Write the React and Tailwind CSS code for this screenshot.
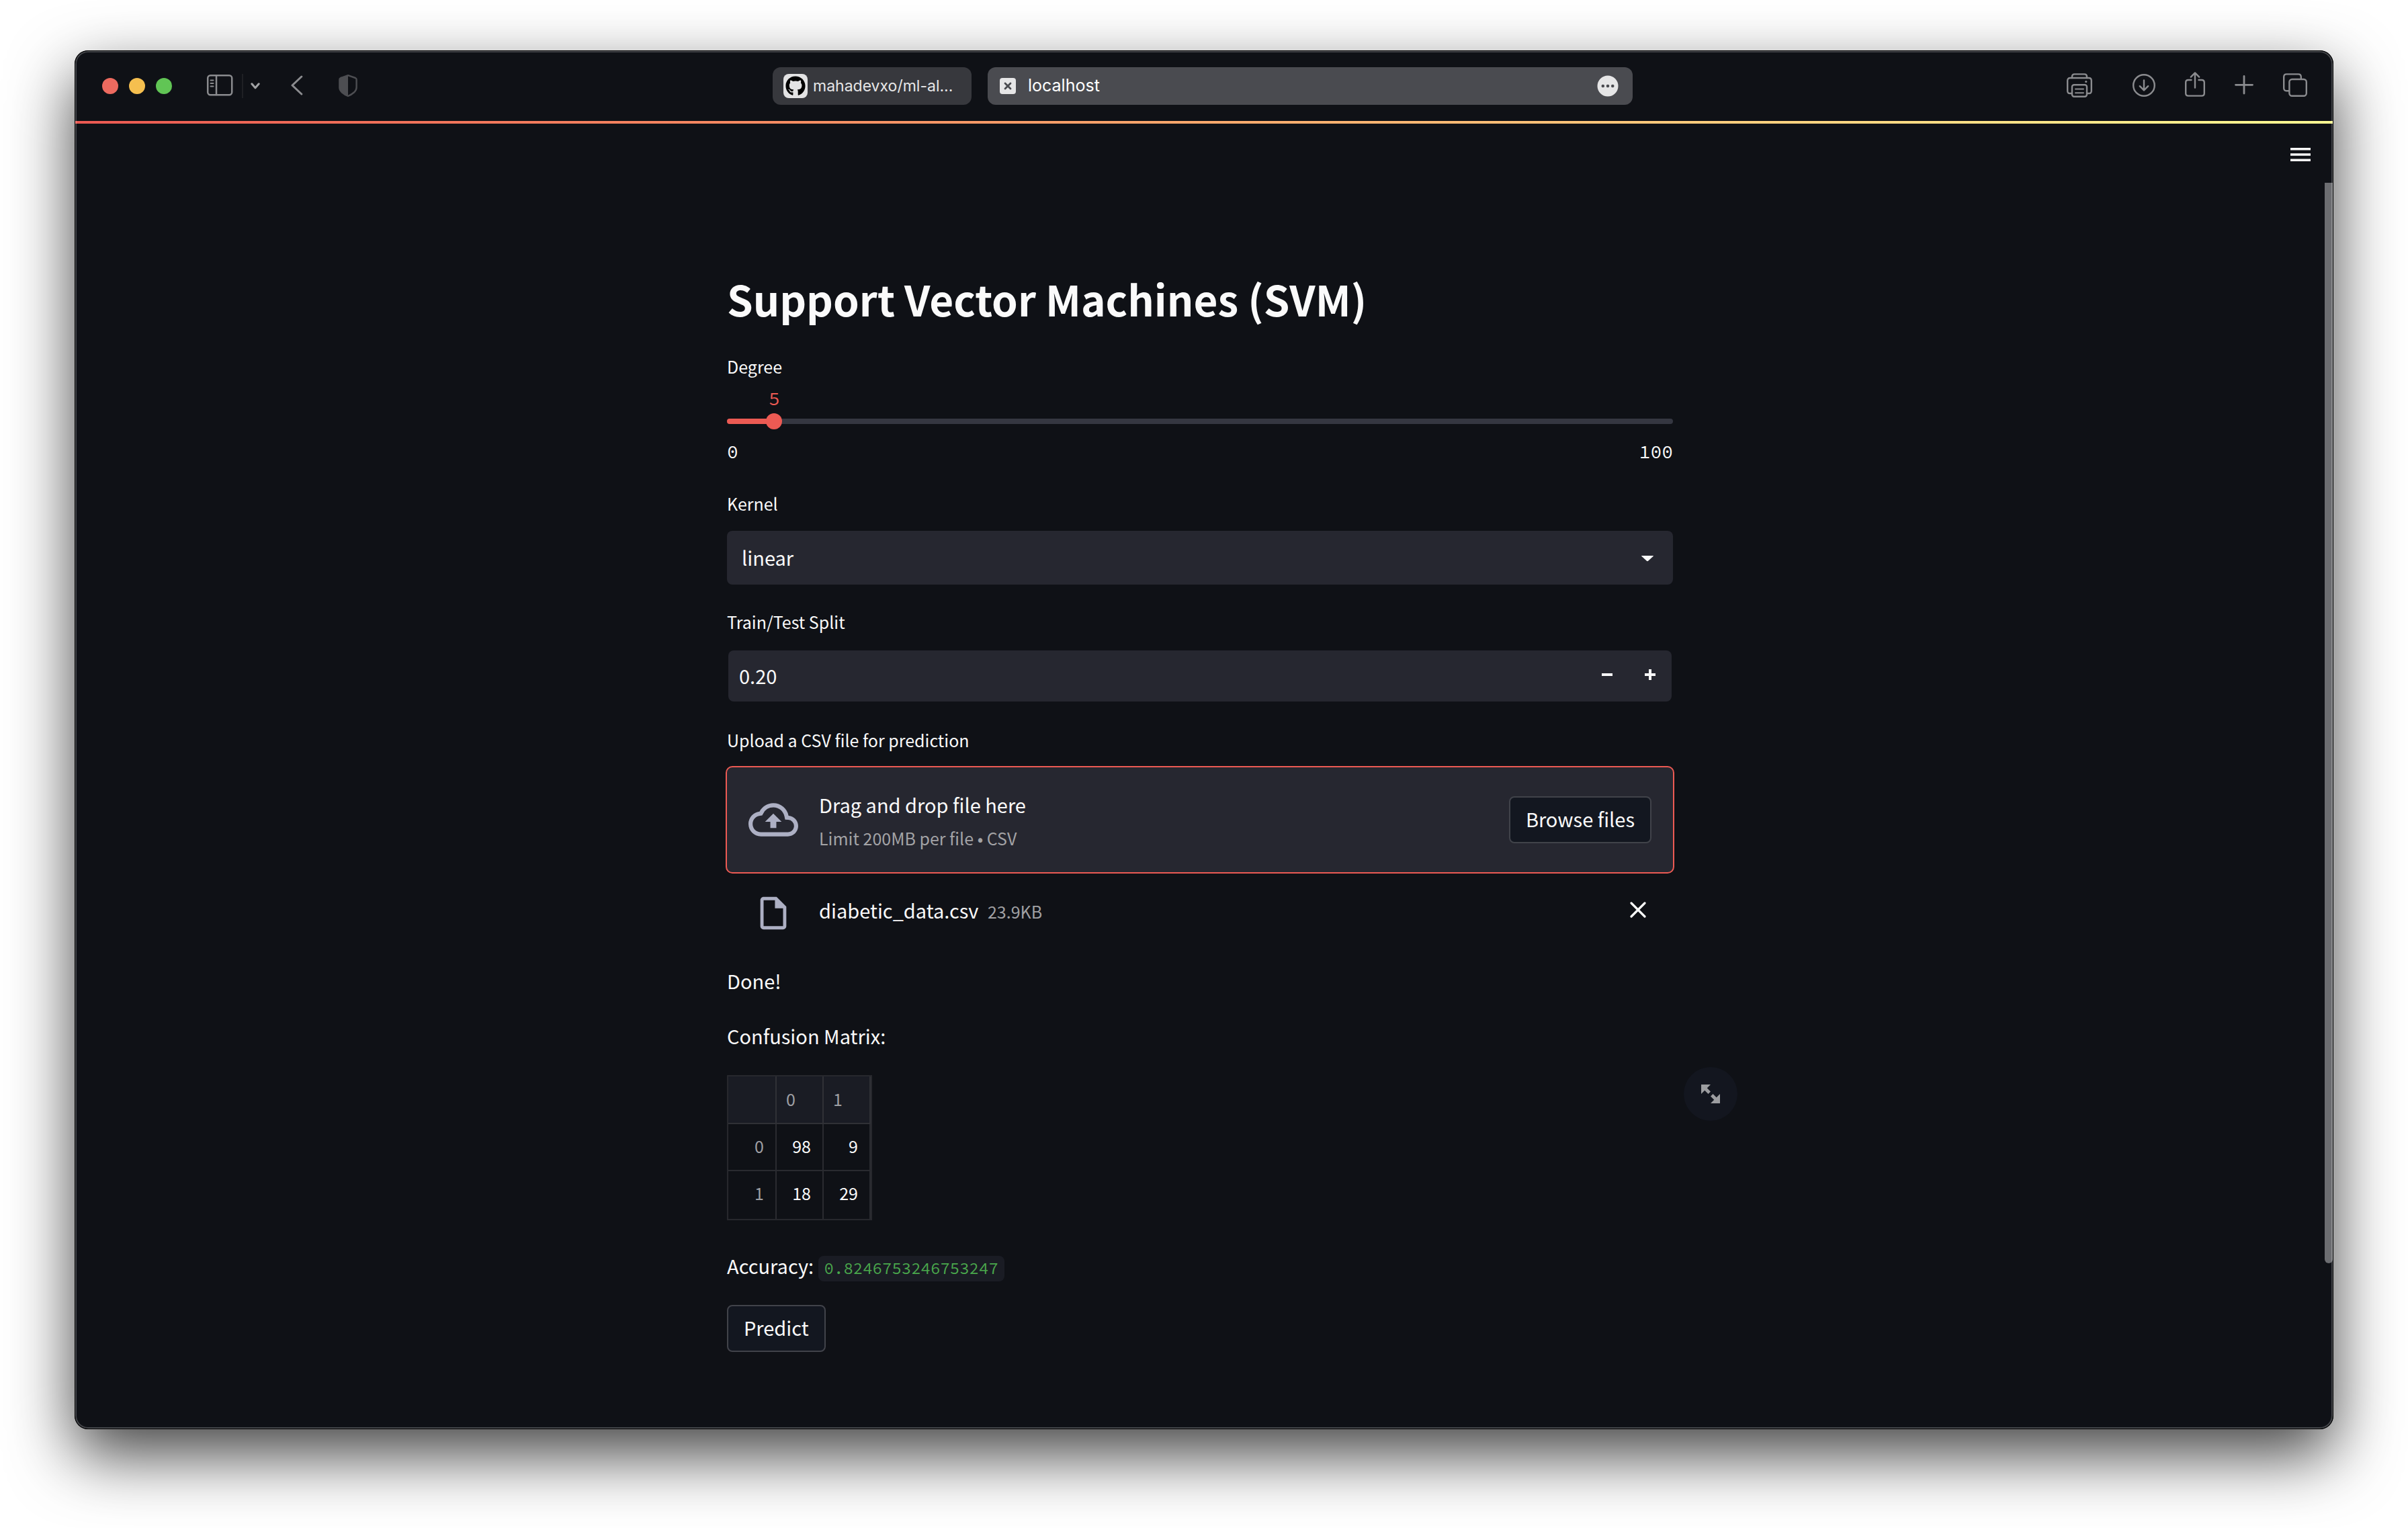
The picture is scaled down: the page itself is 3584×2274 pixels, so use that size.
import React, { useState } from "react";
import { MdOutlineCloudUpload, MdOutlineInsertDriveFile } from "react-icons/md";
import { FaGithub } from "react-icons/fa";

function ToolbarButton({ label, className = "", children }) {
  return (
    <button type="button" aria-label={label} className={`shrink-0 ${className}`}>
      {children}
    </button>
  );
}

const line = {
  fill: "none",
  stroke: "currentColor",
  strokeLinecap: "round",
  strokeLinejoin: "round",
};

function SidebarIcon() {
  return (
    <svg width="40" height="44" viewBox="0 0 40 44" {...line} strokeWidth="2.5">
      <rect x="2.2" y="6.2" width="36" height="29" rx="4" />
      <path d="M15 6.5v28.5" />
      <path d="M6.5 13.5h4M6.5 18h4M6.5 22.5h4" strokeWidth="2" />
    </svg>
  );
}

function ShieldIcon() {
  return (
    <svg width="28" height="44" viewBox="0 0 28 44">
      <path
        d="M14 6.2 L25 10 Q26.6 10.6 26.6 12.4 V24 Q26.6 28 23.5 31 Q19 35 14 37 Q9 35 4.5 31 Q1.4 28 1.4 24 V12.4 Q1.4 10.6 3 10 Z"
        fill="none"
        stroke="currentColor"
        strokeWidth="2.4"
        strokeLinejoin="round"
      />
      <path d="M14 6.2 L3 10 Q1.4 10.6 1.4 12.4 V24 Q1.4 28 4.5 31 Q9 35 14 37 Z" fill="currentColor" />
    </svg>
  );
}

function PrinterIcon() {
  return (
    <svg width="38" height="44" viewBox="0 0 38 44" {...line} strokeWidth="2.4">
      <path d="M8 10V8q0-3.6 3.6-3.6h14.8Q30 4.4 30 8v2" />
      <path d="M8 33H5q-3.8 0-3.8-3.8V14q0-4 4-4h27.6q4 0 4 4v15.2q0 3.8-3.8 3.8h-3" />
      <rect x="8" y="20.2" width="22" height="17.6" rx="3" />
      <path d="M13 26.4h12M13 32.2h12" strokeWidth="2" />
      <circle cx="28.8" cy="15.5" r="1.6" fill="currentColor" stroke="none" />
    </svg>
  );
}

function DownloadIcon() {
  return (
    <svg width="34" height="44" viewBox="0 0 34 44" {...line} strokeWidth="2.4">
      <circle cx="17" cy="21" r="15.8" />
      <path d="M17 13.5v14.5M10.8 22.2l6.2 6.2 6.2-6.2" />
    </svg>
  );
}

function ShareIcon() {
  return (
    <svg width="30" height="44" viewBox="0 0 30 44" {...line} strokeWidth="2.4">
      <path d="M9.5 13H5q-3.8 0-3.8 3.8v16Q1.2 36.6 5 36.6h20q3.8 0 3.8-3.8v-16Q28.8 13 25 13h-4.5" />
      <path d="M15 24.5V3M8.8 8.6L15 2.4l6.2 6.2" />
    </svg>
  );
}

function PlusIcon() {
  return (
    <svg width="28" height="44" viewBox="0 0 28 44" {...line} strokeWidth="2.8">
      <path d="M14 7.5v25.5M1.5 20.3h25" />
    </svg>
  );
}

function CopyIcon() {
  return (
    <svg width="36" height="44" viewBox="0 0 36 44" {...line} strokeWidth="2.4">
      <rect x="9.4" y="12" width="25.4" height="24.8" rx="4" />
      <path d="M9 29.2H5.2q-4 0-4-4V8.4q0-4 4-4h17.6q4 0 4 4v3" />
    </svg>
  );
}

function Toolbar() {
  return (
    <header className="grid h-[104px] grid-cols-[1fr_1280px_1fr] items-center pr-1">
      <div className="flex items-center pl-10 text-[#8b8c8f]">
        <div className="flex gap-4">
          <button type="button" aria-label="Close window" className="size-6 rounded-full bg-[#ed6a5f]" />
          <button type="button" aria-label="Minimize window" className="size-6 rounded-full bg-[#f5bf4f]" />
          <button type="button" aria-label="Zoom window" className="size-6 rounded-full bg-[#61c555]" />
        </div>
        <ToolbarButton label="Sidebar" className="ml-[51px]">
          <SidebarIcon />
        </ToolbarButton>
        <div className="ml-[13px] h-9 w-0.5 bg-[#1f2024]" />
        <ToolbarButton label="Tab groups" className="ml-[11px]">
          <svg width="14" height="44" viewBox="0 0 14 44" {...line} strokeWidth="3" className="text-[#a2a3a5]">
            <path d="M1.8 18.8l5.2 6 5.2-6" />
          </svg>
        </ToolbarButton>
        <ToolbarButton label="Back" className="ml-[46px]">
          <svg width="18" height="44" viewBox="0 0 18 44" {...line} strokeWidth="3">
            <path d="M15.8 8L2 21l13.8 13" />
          </svg>
        </ToolbarButton>
        <ToolbarButton label="Privacy report" className="ml-[53px] text-[#4d4e52]">
          <ShieldIcon />
        </ToolbarButton>
      </div>

      <nav className="flex h-14 gap-6 font-[Inter,sans-serif]">
        <a href="#github" className="flex w-[296px] items-center rounded-[12px] bg-[#37383d] pl-4 text-[23px] text-[#e6e6e7]">
          <span className="mr-2 flex size-9 shrink-0 items-center justify-center rounded-lg bg-[#e3e3e4] text-black">
            <FaGithub size={30} />
          </span>
          <span className="whitespace-nowrap">mahadevxo/ml-al...</span>
        </a>
        <a href="#localhost" className="flex flex-1 items-center rounded-[12px] bg-[#4a4b50] pr-[21px] pl-[18px] text-[25px] text-white">
          <svg width="24" height="24" viewBox="0 0 24 24" className="mr-[18px]">
            <rect width="24" height="24" rx="4" fill="#e6e6e7" />
            <path d="M8 8l8 8M16 8l-8 8" stroke="#4a4b50" strokeWidth="2.8" strokeLinecap="round" />
          </svg>
          <span className="flex-1">localhost</span>
          <svg width="32" height="32" viewBox="0 0 32 32">
            <circle cx="16" cy="16" r="15.5" fill="#e6e6e7" />
            <circle cx="8.8" cy="16" r="2.3" fill="#4a4b50" />
            <circle cx="16" cy="16" r="2.3" fill="#4a4b50" />
            <circle cx="23.2" cy="16" r="2.3" fill="#4a4b50" />
          </svg>
        </a>
      </nav>

      <div className="flex items-center justify-end gap-11 pr-[34px] text-[#8b8c8f]">
        <ToolbarButton label="Print" className="mr-4">
          <PrinterIcon />
        </ToolbarButton>
        <ToolbarButton label="Downloads">
          <DownloadIcon />
        </ToolbarButton>
        <ToolbarButton label="Share">
          <ShareIcon />
        </ToolbarButton>
        <ToolbarButton label="New tab">
          <PlusIcon />
        </ToolbarButton>
        <ToolbarButton label="Tab overview">
          <CopyIcon />
        </ToolbarButton>
      </div>
    </header>
  );
}

function Label({ htmlFor, children }) {
  return (
    <label htmlFor={htmlFor} className="block text-[25px] leading-10">
      {children}
    </label>
  );
}

const mono = "font-['Source_Code_Pro','Noto_Sans_Mono_CJK_JP','Liberation_Mono',monospace]";

function DegreeSlider() {
  const [value, setValue] = useState(5);
  return (
    <div>
      <Label htmlFor="degree">Degree</Label>
      <div className={`relative mt-3 h-8 text-[28px] leading-8 text-[#ec5a53] ${mono}`}>
        <output htmlFor="degree" className="absolute -translate-x-1/2" style={{ left: `${value}%` }}>
          {value}
        </output>
      </div>
      <div className="relative mt-1.5 flex h-6 items-center">
        <div className="h-2 w-full overflow-hidden rounded-full bg-[#353741]">
          <div className="h-full bg-[#ec5a53]" style={{ width: `${value}%` }} />
        </div>
        <input
          id="degree"
          type="range"
          min="0"
          max="100"
          value={value}
          onChange={(e) => setValue(Number(e.target.value))}
          className="absolute -left-3 h-6 w-[calc(100%+24px)] appearance-none bg-transparent [&::-webkit-slider-thumb]:size-6 [&::-webkit-slider-thumb]:appearance-none [&::-webkit-slider-thumb]:rounded-full [&::-webkit-slider-thumb]:bg-[#ec5a53]"
        />
      </div>
      <div className={`mt-[13px] flex justify-between text-[28px] leading-10 ${mono}`}>
        <span>0</span>
        <span>100</span>
      </div>
    </div>
  );
}

function KernelSelect() {
  return (
    <div className="mt-[37px]">
      <Label htmlFor="kernel">Kernel</Label>
      <div className="relative mt-[21px]">
        <select id="kernel" className="h-20 w-full appearance-none rounded-lg bg-[#262730] pl-[22px]">
          <option>linear</option>
          <option>poly</option>
          <option>rbf</option>
          <option>sigmoid</option>
        </select>
        <svg width="20" height="10" viewBox="0 0 20 10" className="pointer-events-none absolute top-9 right-7" fill="#fafafa">
          <path d="M1.5 1h17q.8 0 .2.8l-7.3 6.8q-1.4 1.2-2.8 0L1.3 1.8Q.7 1 1.5 1z" />
        </svg>
      </div>
    </div>
  );
}

function SplitInput() {
  const [value, setValue] = useState(0.2);
  const step = (d) => setValue((v) => Math.min(1, Math.max(0, v + d)));
  return (
    <div className="mt-[35px]">
      <Label htmlFor="split">Train/Test Split</Label>
      <div className="mx-0.5 mt-[23px] flex h-[76px] rounded-lg bg-[#262730]">
        <input id="split" type="text" inputMode="decimal" readOnly value={value.toFixed(2)} className="min-w-0 flex-1 bg-transparent pl-4" />
        <button type="button" aria-label="Decrease" onClick={() => step(-0.01)} className="flex w-16 items-center justify-center pb-1">
          <svg width="16" height="16" viewBox="0 0 8 8" fill="currentColor">
            <path d="M0 3v2h8V3z" />
          </svg>
        </button>
        <button type="button" aria-label="Increase" onClick={() => step(0.01)} className="flex w-16 items-center justify-center pb-1">
          <svg width="16" height="16" viewBox="0 0 8 8" fill="currentColor">
            <path d="M3 0v3H0v2h3v3h2V5h3V3H5V0z" />
          </svg>
        </button>
      </div>
    </div>
  );
}

const outlined =
  "flex h-[70px] items-center justify-center rounded-lg border-2 border-[#41434a] bg-[#131720] px-[23px] pb-0.5";

function Uploader() {
  return (
    <div className="mt-[37px]">
      <Label htmlFor="browse">Upload a CSV file for prediction</Label>
      <section className="-mx-0.5 mt-[19px] flex h-40 items-center rounded-[10px] border-2 border-[#ec5a53] bg-[#262730] px-8">
        <MdOutlineCloudUpload size={74} className="text-[#adb0c4]" />
        <div className="ml-[31px] flex-1">
          <p className="leading-12">Drag and drop file here</p>
          <p className="mt-1.5 text-[25px] leading-10 text-[#a3a3a6]">Limit 200MB per file • CSV</p>
        </div>
        <button id="browse" type="button" className={outlined}>
          Browse files
        </button>
      </section>
      <div className="mt-[30px] flex items-start pr-10">
        <MdOutlineInsertDriveFile size={58} className="ml-10 text-[#adb0c4]" />
        <p className="ml-[39px] flex-1 leading-12">
          diabetic_data.csv <span className="ml-[7px] text-[25px] text-[#a0a0a3]">23.9KB</span>
        </p>
        <button type="button" aria-label="Remove file" className="flex h-12 items-center">
          <svg width="24" height="24" viewBox="0 0 24 24" {...line} strokeWidth="3.2">
            <path d="M2 2l20 20M22 2L2 22" />
          </svg>
        </button>
      </div>
    </div>
  );
}

const matrix = [
  [98, 9],
  [18, 29],
];

function ConfusionMatrix() {
  return (
    <div className="relative mt-[35px]">
      <table className="table-fixed border-separate border-spacing-0 border-2 border-[#27282d] text-[25px] leading-10">
        <thead>
          <tr className="h-[71px] bg-[#1a1c24] text-left text-[#9e9fa3] [&>th]:border-r-2 [&>th]:border-b-2 [&>th]:border-[#303136] [&>th]:pb-1 [&>th]:pl-3.5 [&>th]:font-normal">
            <th className="w-[72px]" />
            <th className="w-[70px]">0</th>
            <th className="w-[70px]">1</th>
          </tr>
        </thead>
        <tbody className="text-right">
          <tr className="h-[70px] [&>*]:border-r-2 [&>*]:border-b-2 [&>*]:border-[#2a2b30] [&>*]:pr-[17px] [&>*]:pb-1">
            <th className="font-normal text-[#9e9fa3]">0</th>
            <td>{matrix[0][0]}</td>
            <td>{matrix[0][1]}</td>
          </tr>
          <tr className="h-[71px] [&>*]:border-r-2 [&>*]:border-[#2a2b30] [&>*]:pr-[17px] [&>*]:pb-2">
            <th className="font-normal text-[#9e9fa3]">1</th>
            <td>{matrix[1][0]}</td>
            <td>{matrix[1][1]}</td>
          </tr>
        </tbody>
      </table>
      <button type="button" aria-label="View fullscreen" className="absolute -top-3 -right-24 flex size-20 items-center justify-center rounded-full bg-[#13161f] text-[#9c9da0]">
        <svg width="28" height="28" viewBox="0 0 8 8" fill="currentColor">
          <path d="M0 0v4l1.5-1.5L3 4l1-1-1.5-1.5L4 0H0zm5 4L4 5l1.5 1.5L4 8h4V4L6.5 5.5 5 4z" />
        </svg>
      </button>
    </div>
  );
}

export default function App() {
  return (
    <div className="bg-white px-[111px] pt-[75px] pb-[147px]">
      <div className="relative rounded-[20px] bg-[#0f1116] p-px text-[#fafafa] shadow-[0_38px_96px_rgba(0,0,0,0.74)]">
        <Toolbar />
        <div className="h-1 bg-linear-to-r from-[#eb5952] via-[#fba86c] to-[#fbf992]" />
        <div className="flex h-[88px] items-start justify-end pt-9 pr-[33px]">
          <button type="button" aria-label="Menu">
            <svg width="30" height="20" viewBox="0 0 30 20" fill="currentColor">
              <path d="M0 0h30v3.5H0zM0 8.2h30v3.6H0zM0 16.5h30V20H0z" />
            </svg>
          </button>
        </div>
        <main className="pr-3 pb-[114px] font-['Noto_Sans_CJK_JP',sans-serif] text-[29px]">
          <div className="mx-auto max-w-[1408px] pt-[136px]">
            <h1 className="mb-[45px] text-[62px] leading-[72px] font-bold">Support Vector Machines (SVM)</h1>
            <DegreeSlider />
            <KernelSelect />
            <SplitInput />
            <Uploader />
            <p className="mt-[47px] leading-12">Done!</p>
            <p className="mt-[34px] leading-12">Confusion Matrix:</p>
            <ConfusionMatrix />
            <p className="mt-[43px] h-12 leading-12">
              Accuracy:{" "}
              <code className={`inline-block rounded-lg bg-[#1a1c24] px-[9px] text-2xl leading-[38px] text-[#4aa84c] ${mono}`}>
                0.8246753246753247
              </code>
            </p>
            <button type="button" className={`mt-[35px] ${outlined}`}>
              Predict
            </button>
          </div>
        </main>
        <div className="pointer-events-none absolute top-[197px] right-px bottom-[247px] w-3 rounded-b-full bg-[#6c6d71]" />
        <div className="pointer-events-none absolute inset-0 rounded-[20px] border border-black inset-shadow-[0_0_0_2px_rgba(255,255,255,0.22)]" />
      </div>
    </div>
  );
}
